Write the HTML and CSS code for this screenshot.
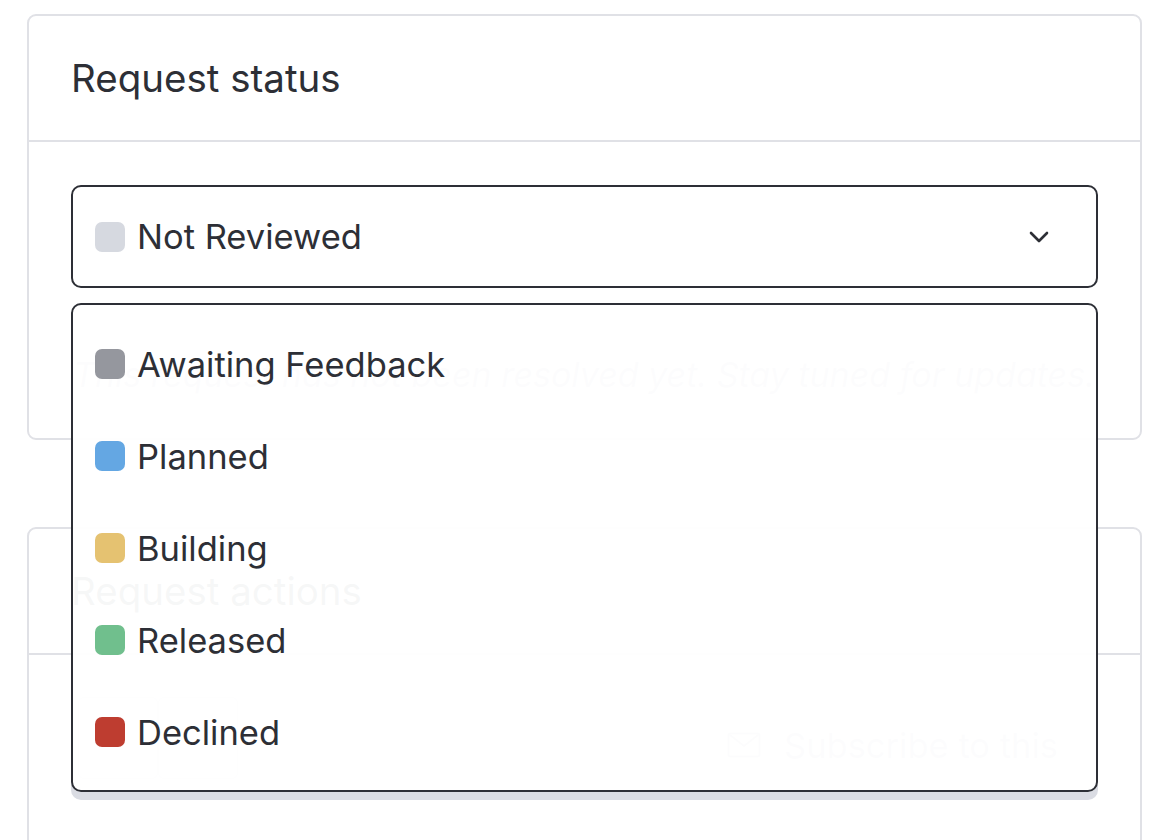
FILE: index.html
```html
<!DOCTYPE html>
<html lang="en">
	<head>
		<meta charset="UTF-8" />
		<meta name="viewport" content="width=device-width, initial-scale=1.0" />
		<title>Request status</title>
		<link rel="stylesheet" href="styles.css">
	</head>
	<body>
		<div class="page">
			<div class="card status-card">
				<div class="card-header">Request status</div>
				<div class="card-body">
					<div class="status-select">
						<div class="select-box">
							<span class="swatch not-reviewed"></span>
							<span class="select-label">Not Reviewed</span>
							<svg class="chevron" width="22" height="14" viewBox="0 0 22 14">
								<path d="M3 3 L11 11 L19 3" fill="none" stroke="#2d2f36" stroke-width="2.6" stroke-linecap="round" stroke-linejoin="round" />
							</svg>
						</div>
						<ul class="status-menu">
							<li><span class="swatch awaiting"></span>Awaiting Feedback</li>
							<li><span class="swatch planned"></span>Planned</li>
							<li><span class="swatch building"></span>Building</li>
							<li><span class="swatch released"></span>Released</li>
							<li><span class="swatch declined"></span>Declined</li>
						</ul>
					</div>
					<p class="status-note">This request has not been resolved yet. Stay tuned for updates.</p>
				</div>
			</div>

			<div class="card actions-card">
				<div class="card-header">Request actions</div>
				<div class="card-body actions-body">
					<div class="vote-group">
						<button class="vote-btn"></button>
						<button class="vote-btn"></button>
					</div>
					<button class="subscribe-btn">
						<svg width="34" height="26" viewBox="0 0 34 26">
							<rect x="1.5" y="1.5" width="31" height="23" rx="2" fill="none" stroke="currentColor" stroke-width="2" />
							<path d="M3 3 L17 14 L31 3" fill="none" stroke="currentColor" stroke-width="2" />
						</svg>
						Subscribe to this
					</button>
				</div>
			</div>
		</div>
	</body>
</html>
```

FILE: styles.css
```css
body {
	margin: 0;
	font-family: Inter, Lato, sans-serif;
	color: #2d2f36;
	background-color: white;
}
.page {
	padding: 14px 20px 0 27px;
	display: flex;
	flex-direction: column;
	gap: 87px;
}
.card {
	border: 2px solid #e0e1e6;
	border-radius: 9px;
	background-color: white;
}
.card-header {
	height: 126px;
	box-sizing: border-box;
	padding: 0 42px;
	display: flex;
	align-items: center;
	font-size: 38.5px;
	border-bottom: 2px solid #e0e1e6;
}
.card-body {
	padding: 43px 42px 0;
}
.status-card .card-body {
	height: 296px;
	box-sizing: border-box;
}
.status-select {
	position: relative;
}
.select-box {
	height: 103px;
	box-sizing: border-box;
	border: 2px solid #2d2f36;
	border-radius: 10px;
	display: flex;
	align-items: center;
	padding: 0 46px 0 22px;
	font-size: 34.5px;
}
.select-label {
	flex: 1;
}
.swatch {
	width: 30px;
	height: 30px;
	border-radius: 7px;
	margin-right: 12px;
	flex-shrink: 0;
}
.not-reviewed { background-color: #d6d9e0; }
.awaiting { background-color: #95979e; }
.planned { background-color: #64a7e3; }
.building { background-color: #e5c271; }
.released { background-color: #70bf8d; }
.declined { background-color: #be3d30; }

.status-menu {
	position: absolute;
	top: 118px;
	left: 0;
	right: 0;
	z-index: 2;
	margin: 0;
	padding: 13px 0 12px;
	list-style: none;
	border: 2px solid #2d2f36;
	border-radius: 10px;
	background-color: rgba(255, 255, 255, 0.96);
	box-shadow: 0 8px 0 #dadce3;
}
.status-menu li {
	height: 92px;
	display: flex;
	align-items: center;
	padding: 0 22px;
	font-size: 34.5px;
}
.status-note {
	margin: 66px 0 0 2px;
	font-size: 34px;
	font-style: italic;
	color: #b4b6bc;
	white-space: nowrap;
}
.actions-card {
	height: 400px;
}
.actions-body {
	display: flex;
	align-items: center;
	justify-content: space-between;
	padding-top: 42px;
}
.vote-group {
	display: flex;
	margin-left: 7px;
}
.vote-btn {
	width: 80px;
	height: 82px;
	border: 1px solid #d3d5da;
	background: white;
	border-radius: 6px;
}
.subscribe-btn {
	display: flex;
	align-items: center;
	gap: 23px;
	border: none;
	background: none;
	font-family: inherit;
	font-size: 34.5px;
	color: #b4b6bc;
	margin: 14px 40px 0 0;
	padding: 0;
}
```
